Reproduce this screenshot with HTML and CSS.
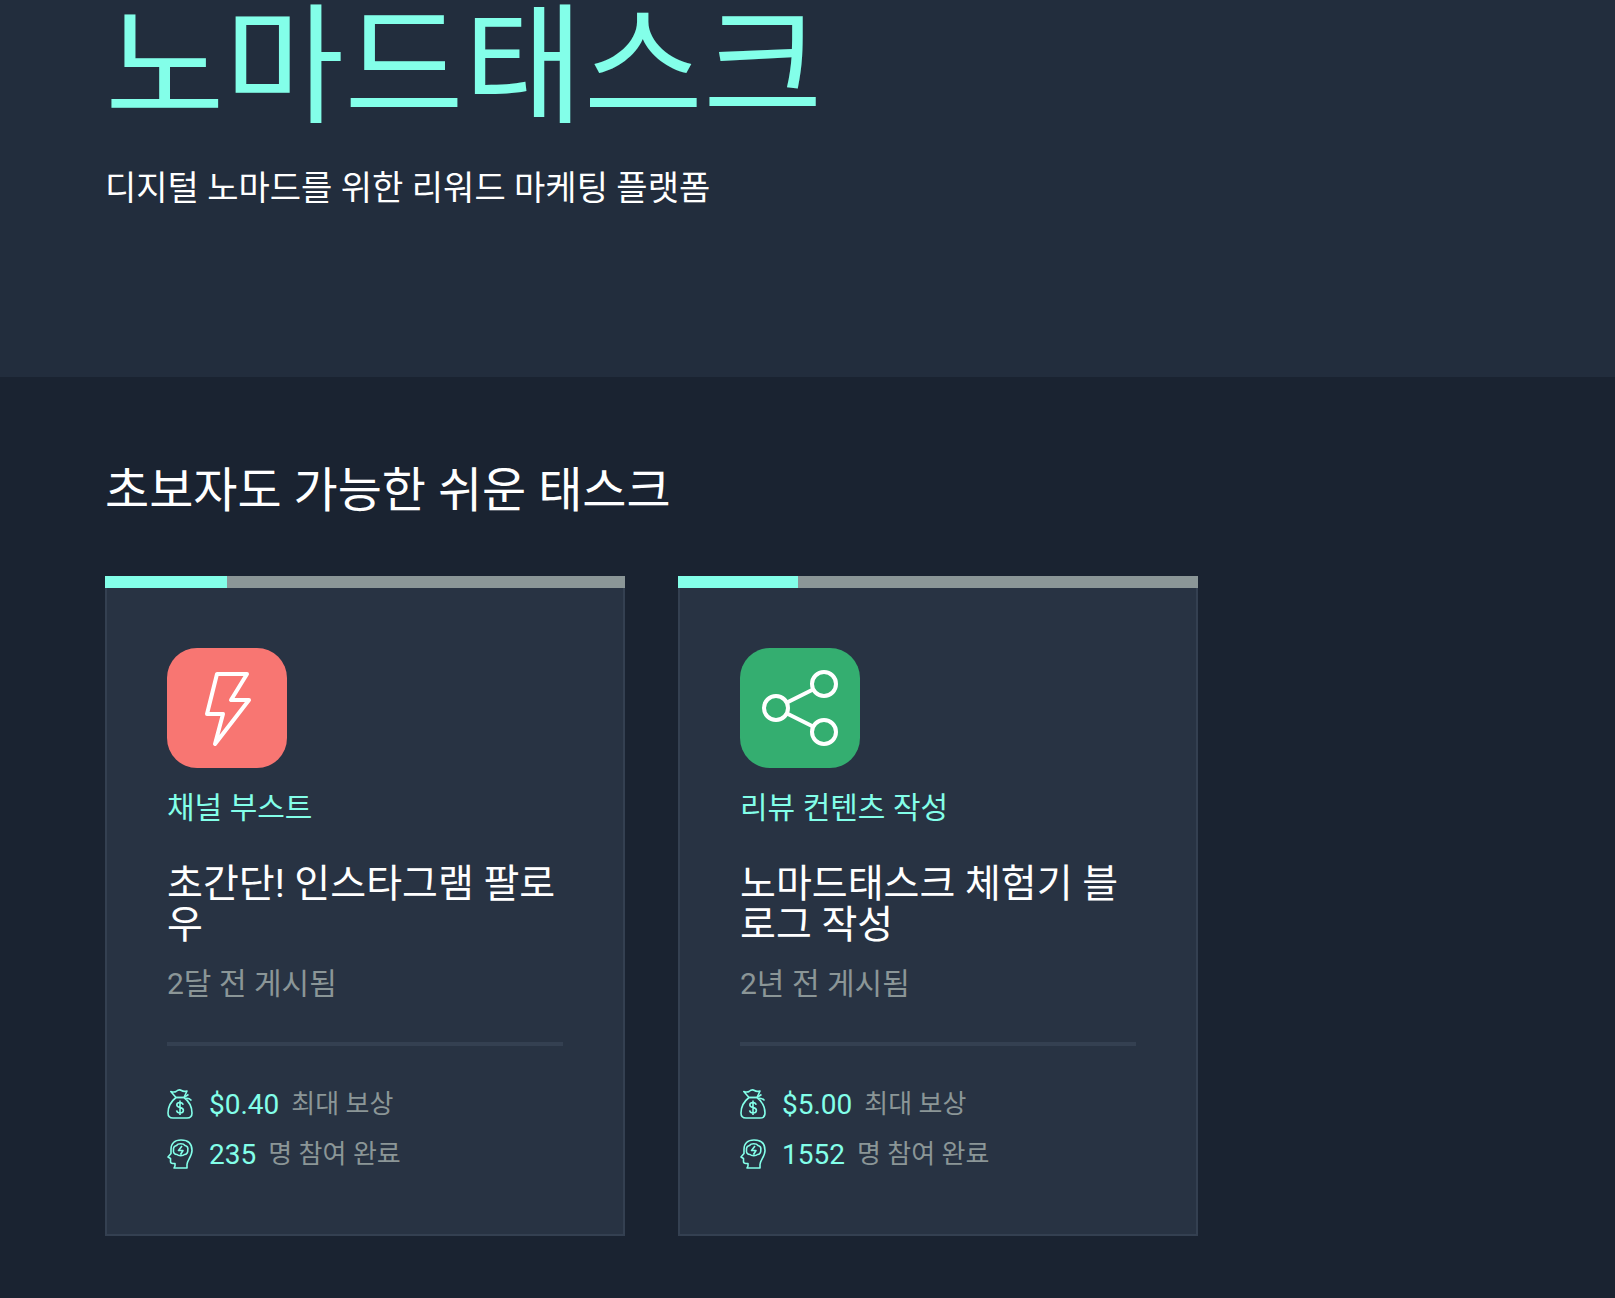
FILE: index.html
```html
<!DOCTYPE html>
<html lang="ko">
<head>
<meta charset="utf-8">
<title>노마드태스크</title>
<link rel="stylesheet" href="styles.css">
</head>
<body>
<svg class="sprite" aria-hidden="true">
  <symbol id="bag" viewBox="0 0 26 30">
    <path d="M9 8.500 3.800 2.500C6 3.200 7.500 3.500 9 2.500 11 .8 13 .6 14.500 1.500 16 2.600 18 2.500 20 2L17 8.500Z"/>
    <path d="M9 8.500C4.500 12 1 18 1 24 1 27.500 3 29 6 29H20C23 29 25 27.500 25 24 25 18 21.500 12 17 8.500ZM17.500 8 21.500 5.500M18.500 9.500C21 8.800 22.500 9.500 24.500 11.500"/>
    <path d="M16.200 15.800C15.800 14.300 14.800 13.500 13 13.500 11 13.500 9.800 14.600 9.800 16 9.800 19.500 16.400 17.800 16.400 21.200 16.400 22.800 15 24 13 24 11 24 9.900 23 9.600 21.400M13 11.500V26"/>
  </symbol>
  <symbol id="mind" viewBox="0 0 26 30">
    <path d="M7 29H20V25.500C20 21.500 25 17.500 25 11.500 25 4 20.500 1 14 1 7.500 1 4 4.500 4 10.500V14.500L1 18 3.500 19.500V22.500C3.500 24 4.500 24.500 6 24.500H8V27Z"/>
    <path d="M10 15.500C7.500 15.500 6 13.500 6.500 11 6.200 8.500 7.500 7 9.500 6.500 11 4.200 16.500 4.200 18 6.500 20.200 7 21.200 8.800 20.800 11 21 13.500 19.500 15.500 17.500 15.500 16 17 11.500 17 10 15.500ZM15 7 11.500 11.500H16L13.500 15.500"/>
  </symbol>
</svg>
<header class="hero">
  <div class="container">
    <h1 class="hero-title">노마드태스크</h1>
    <p class="hero-text">디지털 노마드를 위한 리워드 마케팅 플랫폼</p>
  </div>
</header>
<main class="container tasks">
  <h2 class="section-title">초보자도 가능한 쉬운 태스크</h2>
  <div class="grid">
    <article class="card">
      <div class="progress"><div class="progress-fill" style="width:23.5%"></div></div>
      <div class="card-body">
        <svg class="badge badge-red" viewBox="0 0 120 120" aria-hidden="true"><path d="M50 26H80L64 52H82L48 96 56 66H40Z"/></svg>
        <p class="category">채널 부스트</p>
        <h3 class="card-title">초간단! 인스타그램 팔로우</h3>
        <p class="posted">2달 전 게시됨</p>
        <hr class="divider">
        <ul class="stats">
          <li class="stat"><svg class="stat-icon" aria-hidden="true"><use href="#bag"/></svg><strong class="value">$0.40</strong><span class="label">최대 보상</span></li>
          <li class="stat"><svg class="stat-icon" aria-hidden="true"><use href="#mind"/></svg><strong class="value">235</strong><span class="label">명 참여 완료</span></li>
        </ul>
      </div>
    </article>
    <article class="card">
      <div class="progress"><div class="progress-fill" style="width:23%"></div></div>
      <div class="card-body">
        <svg class="badge badge-green" viewBox="0 0 120 120" aria-hidden="true"><circle cx="36" cy="60" r="12"/><circle cx="84" cy="36" r="12"/><circle cx="84" cy="84" r="12"/><path d="M47 54.500 73 41.500M47 65.500 73 78.500"/></svg>
        <p class="category">리뷰 컨텐츠 작성</p>
        <h3 class="card-title">노마드태스크 체험기 블로그 작성</h3>
        <p class="posted">2년 전 게시됨</p>
        <hr class="divider">
        <ul class="stats">
          <li class="stat"><svg class="stat-icon" aria-hidden="true"><use href="#bag"/></svg><strong class="value">$5.00</strong><span class="label">최대 보상</span></li>
          <li class="stat"><svg class="stat-icon" aria-hidden="true"><use href="#mind"/></svg><strong class="value">1552</strong><span class="label">명 참여 완료</span></li>
        </ul>
      </div>
    </article>
  </div>
</main>
</body>
</html>
```
FILE: styles.css
```css
* { box-sizing: border-box; margin: 0; padding: 0; }
body {
  background: #1a2331;
  color: #fff;
  font-family: Roboto, "Noto Sans CJK KR", sans-serif;
}
.sprite { display: none; }
.container { padding: 0 105px; }
.hero { background: #222d3d; padding-bottom: 165px; }
.hero-title { color: #83ffe9; font-size: 130px; line-height: 136px; font-weight: 400; }
.hero-text { margin-top: 28px; font-size: 34px; line-height: 48px; }
.tasks { padding-top: 82px; padding-bottom: 62px; }
.section-title { font-size: 48px; line-height: 64px; font-weight: 400; }
.grid {
  display: grid;
  grid-template-columns: repeat(auto-fill, minmax(400px, 520px));
  gap: 53px;
  margin-top: 53px;
}
.progress { height: 12px; background: #8b9697; }
.progress-fill { height: 100%; background: #83ffe9; }
.card-body { background: #283343; border: 2px solid #344051; border-top: 0; padding: 60px 60px 55px; }
.badge {
  display: block;
  width: 120px;
  height: 120px;
  border-radius: 30px;
  fill: none;
  stroke: #fff;
  stroke-width: 4;
  stroke-linejoin: round;
}
.badge-red { background: #f87672; }
.badge-green { background: #34ae70; }
.category { margin-top: 20px; color: #83ffe9; font-size: 30px; line-height: 40px; }
.card-title { margin-top: 36px; font-size: 39px; line-height: 41px; font-weight: 400; word-break: break-all; }
.posted { margin-top: 18px; color: #8b9697; font-size: 30px; line-height: 40px; }
.divider { margin-top: 38px; border: 0; height: 4px; background: #344051; }
.stats { margin-top: 33px; list-style: none; }
.stat { display: flex; align-items: center; height: 50px; }
.stat-icon {
  width: 26px;
  height: 30px;
  margin-right: 16px;
  fill: none;
  stroke: #83ffe9;
  stroke-width: 1.6;
  stroke-linejoin: round;
}
.value { margin-right: 12px; color: #83ffe9; font-size: 28px; font-weight: 400; }
.label { color: #8b9697; font-size: 26px; line-height: 36px; }
```
